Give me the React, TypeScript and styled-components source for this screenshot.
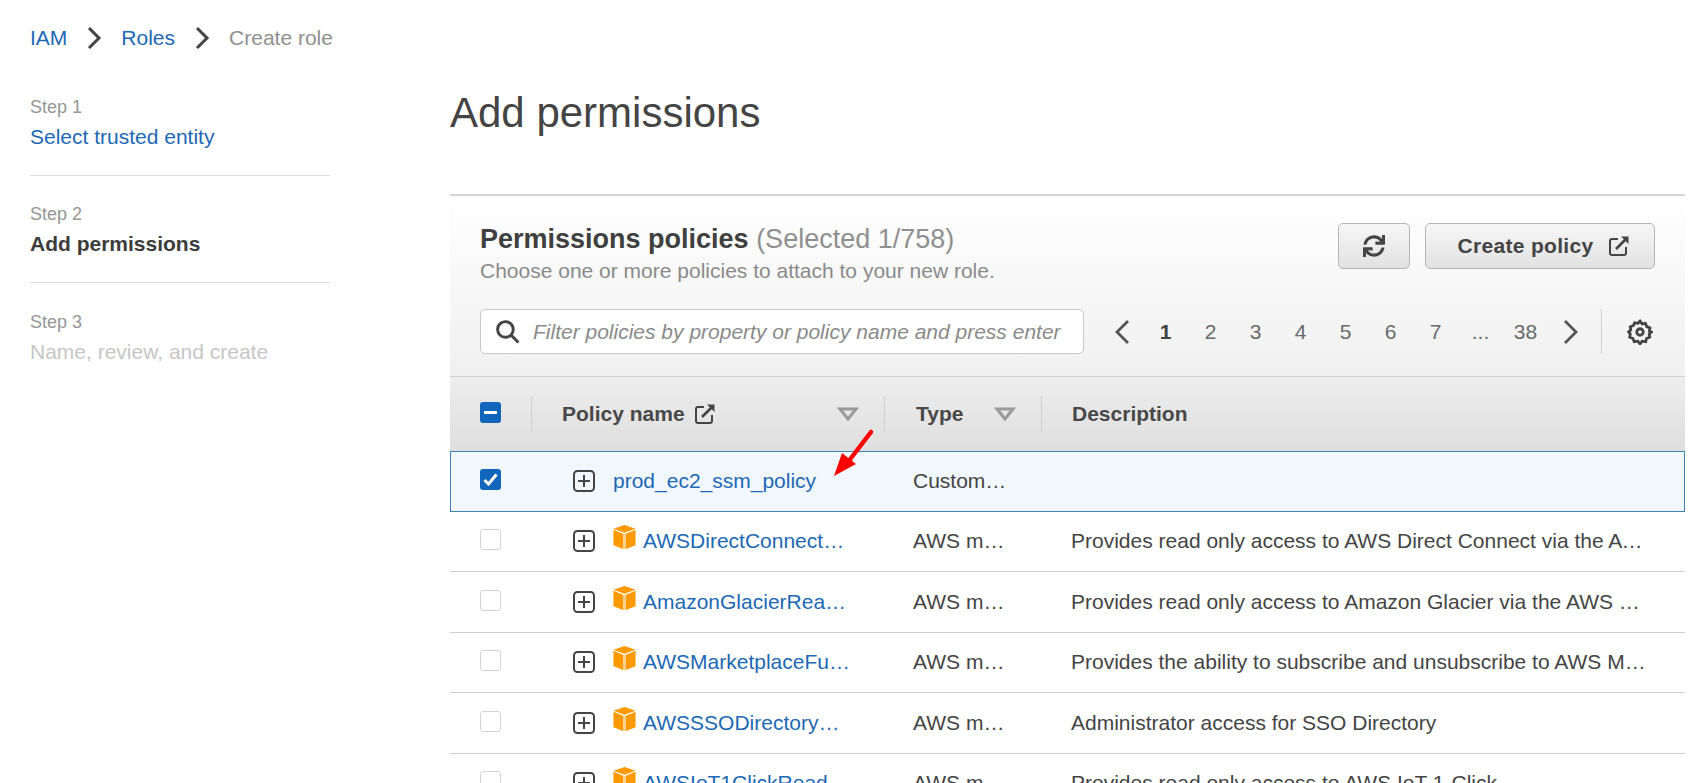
import React from 'react';
import styled, {createGlobalStyle} from 'styled-components';
import {FaSync} from 'react-icons/fa';

const Global = createGlobalStyle`
  html, body {
    margin: 0;
    padding: 0;
    background: #fff;
    font-family: "Liberation Sans", Arial, sans-serif;
    color: #444;
  }
`;

const Page = styled.div`
  position: relative;
  width: 1693px;
  height: 783px;
  overflow: hidden;
`;

const Breadcrumbs = styled.nav`
  display: flex;
  align-items: center;
  height: 30px;
  padding: 23px 0 0 30px;
  font-size: 21px;
`;

const Crumb = styled.a<{$current?: boolean}>`
  color: ${({$current}) => $current ? '#8f8f8f' : '#1d68b3'};
`;

const CrumbSep = styled.svg`
  width: 16px;
  height: 24px;
  margin: 0 19px;
  fill: none;
  stroke: #444;
  stroke-width: 3;
`;

const Body = styled.div`
  display: flex;
  padding: 26px 8px 0 30px;
`;

const Sidebar = styled.aside`
  width: 300px;
  flex: none;
  margin-right: 120px;
`;

const StepItem = styled.div`
  height: 97px;
  box-sizing: border-box;
  padding-top: 17px;
  margin-bottom: 10px;
  border-bottom: 1px solid #dcdcdc;

  &:last-child {
    padding-top: 18px;
    border-bottom: none;
  }
`;

const StepLabel = styled.div`
  font-size: 18px;
  line-height: 22px;
  color: #969696;
`;

const StepName = styled.div<{$state: 'link' | 'active' | 'disabled'}>`
  margin-top: 7px;
  font-size: 21px;
  line-height: 24px;
  color: ${({$state}) => $state === 'link' ? '#1d68b3' : $state === 'active' ? '#3c3c3c' : '#c6c6c6'};
  font-weight: ${({$state}) => $state === 'active' ? 700 : 400};
`;

const Main = styled.main`
  flex: 1;
  min-width: 0;
`;

const Title = styled.h1`
  margin: 0;
  height: 115px;
  padding-top: 9px;
  box-sizing: border-box;
  font-size: 42px;
  line-height: 50px;
  font-weight: 400;
  color: #444;
`;

const Panel = styled.section`
  border-top: 2px solid #d5d5d5;
`;

const PanelHead = styled.div`
  height: 181px;
  box-sizing: border-box;
  padding: 27px 30px 0 30px;
  background: linear-gradient(#fff, #f0f0f0);
  border-bottom: 1px solid #cfcfcf;
`;

const HeadTop = styled.div`
  display: flex;
  justify-content: space-between;
`;

const PanelTitle = styled.h2`
  margin: 1px 0 0;
  font-size: 27px;
  line-height: 30px;
  font-weight: 700;
  color: #3f3f3f;
`;

const TitleCount = styled.span`
  font-weight: 400;
  color: #8f8f8f;
`;

const PanelSub = styled.div`
  font-size: 21px;
  line-height: 26px;
  margin-top: 4px;
  color: #8a8a8a;
`;

const Actions = styled.div`
  display: flex;
  gap: 15px;
  height: 46px;
`;

const Button = styled.button<{$wide?: boolean}>`
  display: flex;
  align-items: center;
  justify-content: center;
  gap: 15px;
  width: ${({$wide}) => $wide ? '230px' : '72px'};
  height: 46px;
  padding: ${({$wide}) => $wide ? '0 0 0 8px' : '0'};
  border: 1px solid #b5b5b5;
  border-radius: 5px;
  background: linear-gradient(#f6f6f6, #e2e2e2);
  font: 700 21px "Liberation Sans", Arial, sans-serif;
  letter-spacing: 0.3px;
  color: #444;
`;

const Tools = styled.div`
  display: flex;
  align-items: center;
  margin-top: 25px;
`;

const SearchBox = styled.div`
  display: flex;
  align-items: center;
  gap: 13px;
  width: 604px;
  height: 45px;
  box-sizing: border-box;
  padding-left: 14px;
  background: #fff;
  border: 1px solid #c8c8c8;
  border-radius: 5px;
`;

const SearchText = styled.span`
  font-size: 21px;
  font-style: italic;
  color: #8a8a8a;
  white-space: nowrap;
`;

const Pager = styled.div`
  display: flex;
  align-items: center;
  margin-left: 29px;
  height: 45px;
`;

const PageNum = styled.span<{$active?: boolean}>`
  width: 45px;
  text-align: center;
  font-size: 21px;
  font-weight: ${({$active}) => $active ? 700 : 400};
  color: ${({$active}) => $active ? '#444' : '#6a6a6a'};
`;

const PagerArrow = styled.svg<{$next?: boolean}>`
  flex: none;
  width: 18px;
  height: 26px;
  margin: ${({$next}) => $next ? '0 0 0 14px' : '0 12px 0 0'};
  fill: none;
  stroke: #555;
  stroke-width: 2.8;
`;

const ToolDivider = styled.div`
  width: 1px;
  height: 45px;
  margin: 0 25px 0 21px;
  background: #cfcfcf;
`;

const headColumns = '82px 353px 157px 1fr';
const rowColumns = '81px 382px 158px 1fr';

const HeaderRow = styled.div`
  display: grid;
  grid-template-columns: ${headColumns};
  height: 74px;
  align-items: center;
  background: linear-gradient(#ededed, #dfdfdf);
  font-size: 21px;
  font-weight: 700;
  color: #484848;
`;

const HeaderCheck = styled.div`
  display: flex;
  align-items: center;
  height: 36px;
  padding-left: 30px;
  border-right: 1px solid #cfcfcf;
`;

const HeaderCell = styled.div<{$pad: number; $last?: boolean}>`
  display: flex;
  align-items: center;
  height: 36px;
  box-sizing: border-box;
  padding-left: ${({$pad}) => $pad}px;
  padding-right: 25px;
  border-right: ${({$last}) => $last ? 'none' : '1px solid #cfcfcf'};
`;

const HeaderLinkIcon = styled.span`
  display: flex;
  margin-left: 9px;
`;

const SortMark = styled.svg`
  width: 22px;
  height: 14px;
  margin-left: auto;
  fill: none;
  stroke: #9a9a9a;
  stroke-width: 3;
`;

const Row = styled.div<{$selected?: boolean}>`
  display: grid;
  grid-template-columns: ${rowColumns};
  height: 60.5px;
  box-sizing: border-box;
  align-items: center;
  font-size: 21px;
  background: ${({$selected}) => $selected ? '#f0f8fe' : '#fff'};
  border-bottom: ${({$selected}) => $selected ? 'none' : '1px solid #cfcfcf'};
  box-shadow: ${({$selected}) => $selected ? 'inset 0 0 0 1px #3f84ae' : 'none'};
`;

const CheckCell = styled.div`
  display: flex;
  padding-left: 30px;
`;

const Checkbox = styled.span<{$on?: boolean}>`
  display: flex;
  align-items: center;
  justify-content: center;
  width: 21px;
  height: 21px;
  margin-top: -3px;
  box-sizing: border-box;
  border-radius: 3px;
  background: ${({$on}) => $on ? '#1166bb' : '#fff'};
  border: ${({$on}) => $on ? 'none' : '1px solid #d3d3d3'};
`;

const NameCell = styled.div`
  display: flex;
  align-items: center;
  min-width: 0;
  padding-left: 42px;
  padding-right: 62px;
`;

const ExpandIcon = styled.svg`
  flex: none;
  width: 22px;
  height: 22px;
  margin-right: 18px;
  fill: none;
  stroke: #444;
`;

const Cube = styled.svg`
  flex: none;
  width: 23px;
  height: 24px;
  margin: -8px 7px 0 0;
`;

const PolicyLink = styled.a`
  flex: 1;
  min-width: 0;
  color: #1d68b3;
  white-space: nowrap;
  overflow: hidden;
  text-overflow: ellipsis;
`;

const TypeCell = styled.div`
  min-width: 0;
  padding-right: 62px;
  white-space: nowrap;
  overflow: hidden;
  text-overflow: ellipsis;
  color: #444;
`;

const DescCell = styled.div`
  min-width: 0;
  padding-right: 38px;
  white-space: nowrap;
  overflow: hidden;
  text-overflow: ellipsis;
  color: #444;
`;

const Callout = styled.svg`
  position: absolute;
  left: 830px;
  top: 426px;
  width: 48px;
  height: 54px;
`;

const ExternalIcon: React.FC = () => (
  <svg width="22" height="22" viewBox="0 0 22 22" fill="none" stroke="#444" strokeWidth="2">
    <path d="M10 4H4a2 2 0 0 0-2 2v12a2 2 0 0 0 2 2h12a2 2 0 0 0 2-2v-6" />
    <path d="M8 14 19 3" strokeWidth="2.600" />
    <path d="M13 1.500h7.500V9z" fill="#444" stroke="none" />
  </svg>
);

const AwsCube: React.FC = () => (
  <Cube viewBox="0 0 23 25">
    <path d="M11.500 0 23 4 11.500 8 0 4z" fill="#f90" />
    <path d="M0 5 10 9v16L0 21z" fill="#f90" />
    <path d="M23 5 13 9v16L23 21z" fill="#f90" />
    <path d="M10 9h3v16h-3z" fill="#ffd08a" />
  </Cube>
);

const PolicyRow: React.FC<{name: string; type: string; desc?: string; selected?: boolean}> = ({name, type, desc, selected}) => (
  <Row $selected={selected}>
    <CheckCell>
      <Checkbox $on={selected}>
        {selected && (
          <svg width="15" height="13" viewBox="0 0 15 13" fill="none" stroke="#fff" strokeWidth="3">
            <path d="M1.500 7 5.500 11 13.500 1.500" />
          </svg>
        )}
      </Checkbox>
    </CheckCell>
    <NameCell>
      <ExpandIcon viewBox="0 0 22 22">
        <rect x="1" y="1" width="20" height="20" rx="3.500" strokeWidth="2" />
        <path d="M11 5v12M5 11h12" strokeWidth="2" />
      </ExpandIcon>
      {!selected && <AwsCube />}
      <PolicyLink>{name}</PolicyLink>
    </NameCell>
    <TypeCell>{type}</TypeCell>
    <DescCell>{desc}</DescCell>
  </Row>
);

const App: React.FC = () => (
  <Page>
    <Global />
    <Breadcrumbs>
      <Crumb>IAM</Crumb>
      <CrumbSep viewBox="0 0 16 24"><path d="M3 2l10 10L3 22" /></CrumbSep>
      <Crumb>Roles</Crumb>
      <CrumbSep viewBox="0 0 16 24"><path d="M3 2l10 10L3 22" /></CrumbSep>
      <Crumb $current>Create role</Crumb>
    </Breadcrumbs>
    <Body>
      <Sidebar>
        <StepItem>
          <StepLabel>Step 1</StepLabel>
          <StepName $state="link">Select trusted entity</StepName>
        </StepItem>
        <StepItem>
          <StepLabel>Step 2</StepLabel>
          <StepName $state="active">Add permissions</StepName>
        </StepItem>
        <StepItem>
          <StepLabel>Step 3</StepLabel>
          <StepName $state="disabled">Name, review, and create</StepName>
        </StepItem>
      </Sidebar>
      <Main>
        <Title>Add permissions</Title>
        <Panel>
          <PanelHead>
            <HeadTop>
              <div>
                <PanelTitle>Permissions policies <TitleCount>(Selected 1/758)</TitleCount></PanelTitle>
                <PanelSub>Choose one or more policies to attach to your new role.</PanelSub>
              </div>
              <Actions>
                <Button><FaSync size={22} color="#444" /></Button>
                <Button $wide>Create policy <ExternalIcon /></Button>
              </Actions>
            </HeadTop>
            <Tools>
              <SearchBox>
                <svg width="25" height="25" viewBox="0 0 24 24" fill="none" stroke="#444" strokeWidth="2.800">
                  <circle cx="10" cy="10" r="7.500" />
                  <path d="m15.500 15.500 7 7" />
                </svg>
                <SearchText>Filter policies by property or policy name and press enter</SearchText>
              </SearchBox>
              <Pager>
                <PagerArrow viewBox="0 0 18 26"><path d="M15 2 4 13l11 11" /></PagerArrow>
                <PageNum $active>1</PageNum>
                <PageNum>2</PageNum>
                <PageNum>3</PageNum>
                <PageNum>4</PageNum>
                <PageNum>5</PageNum>
                <PageNum>6</PageNum>
                <PageNum>7</PageNum>
                <PageNum>...</PageNum>
                <PageNum>38</PageNum>
                <PagerArrow $next viewBox="0 0 18 26"><path d="M3 2l11 11L3 24" /></PagerArrow>
                <ToolDivider />
                <svg width="26" height="26" viewBox="0 0 24 24" fill="none" stroke="#444" strokeWidth="2.600">
                  <path d="M12 2l2 2.500 3-.5 1.200 3 3 1.200-.5 3L22.500 12l-2 1.800.5 3-3 1.200L17.300 21l-3.300-.5L12 23l-2-2.500-3.300.5-1.200-3-3-1.200.5-3L1.500 12l2-1.800-.5-3 3-1.200L7 3.500l3 .5z" />
                  <circle cx="12" cy="12" r="3" />
                </svg>
              </Pager>
            </Tools>
          </PanelHead>
          <HeaderRow>
            <HeaderCheck>
              <Checkbox $on>
                <svg width="13" height="3" viewBox="0 0 13 3"><rect width="13" height="3" fill="#fff" /></svg>
              </Checkbox>
            </HeaderCheck>
            <HeaderCell $pad={30}>
              Policy name
              <HeaderLinkIcon><ExternalIcon /></HeaderLinkIcon>
              <SortMark viewBox="0 0 22 14"><path d="M3 2h16l-8 10z" /></SortMark>
            </HeaderCell>
            <HeaderCell $pad={31}>
              Type
              <SortMark viewBox="0 0 22 14"><path d="M3 2h16l-8 10z" /></SortMark>
            </HeaderCell>
            <HeaderCell $pad={30} $last>Description</HeaderCell>
          </HeaderRow>
          <PolicyRow selected name="prod_ec2_ssm_policy" type="Customer managed" />
          <PolicyRow name="AWSDirectConnectReadOnlyAccess" type="AWS managed" desc="Provides read only access to AWS Direct Connect via the AWS Management Console." />
          <PolicyRow name="AmazonGlacierReadOnlyAccess" type="AWS managed" desc="Provides read only access to Amazon Glacier via the AWS Management Console." />
          <PolicyRow name="AWSMarketplaceFullAccess" type="AWS managed" desc="Provides the ability to subscribe and unsubscribe to AWS Marketplace software." />
          <PolicyRow name="AWSSSODirectoryAdministrator" type="AWS managed" desc="Administrator access for SSO Directory" />
          <PolicyRow name="AWSIoT1ClickReadOnlyAccess" type="AWS managed" desc="Provides read only access to AWS IoT 1-Click." />
        </Panel>
      </Main>
    </Body>
    <Callout viewBox="0 0 48 54">
      <path d="M41 6 18 36" stroke="#f00" strokeWidth="4.500" strokeLinecap="round" />
      <path d="M4 50 12 27 26 38z" fill="#f00" />
    </Callout>
  </Page>
);

export default App;
